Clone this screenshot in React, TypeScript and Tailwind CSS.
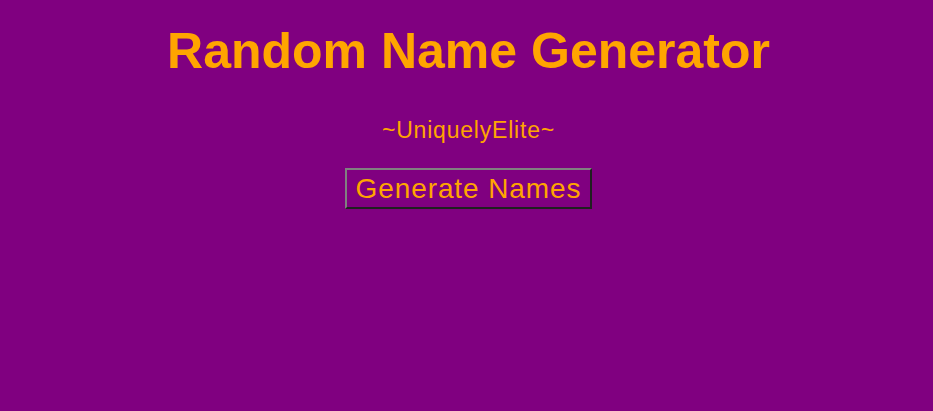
export default function App() {
  return (
    <div className="min-h-[411px] bg-[#800080] text-center text-[#ffa500]" style={{ fontFamily: '"Liberation Sans", Arial, sans-serif' }}>
      <div className="flex flex-col items-center pt-[22px] pl-[4px]">
        <h1 className="text-[50px] font-bold leading-[58px]">Random Name Generator</h1>
        <p className="mt-[37px] text-[23px] leading-[26px] tracking-[0.8px]">~UniquelyElite~</p>
        <button className="mt-[25px] border-2 border-t-[#808080] border-l-[#808080] border-b-[#202020] border-r-[#202020] bg-transparent px-[9px] text-[28px] leading-[37px] tracking-[0.9px] text-[#ffa500]">
          Generate Names
        </button>
      </div>
    </div>
  );
}
